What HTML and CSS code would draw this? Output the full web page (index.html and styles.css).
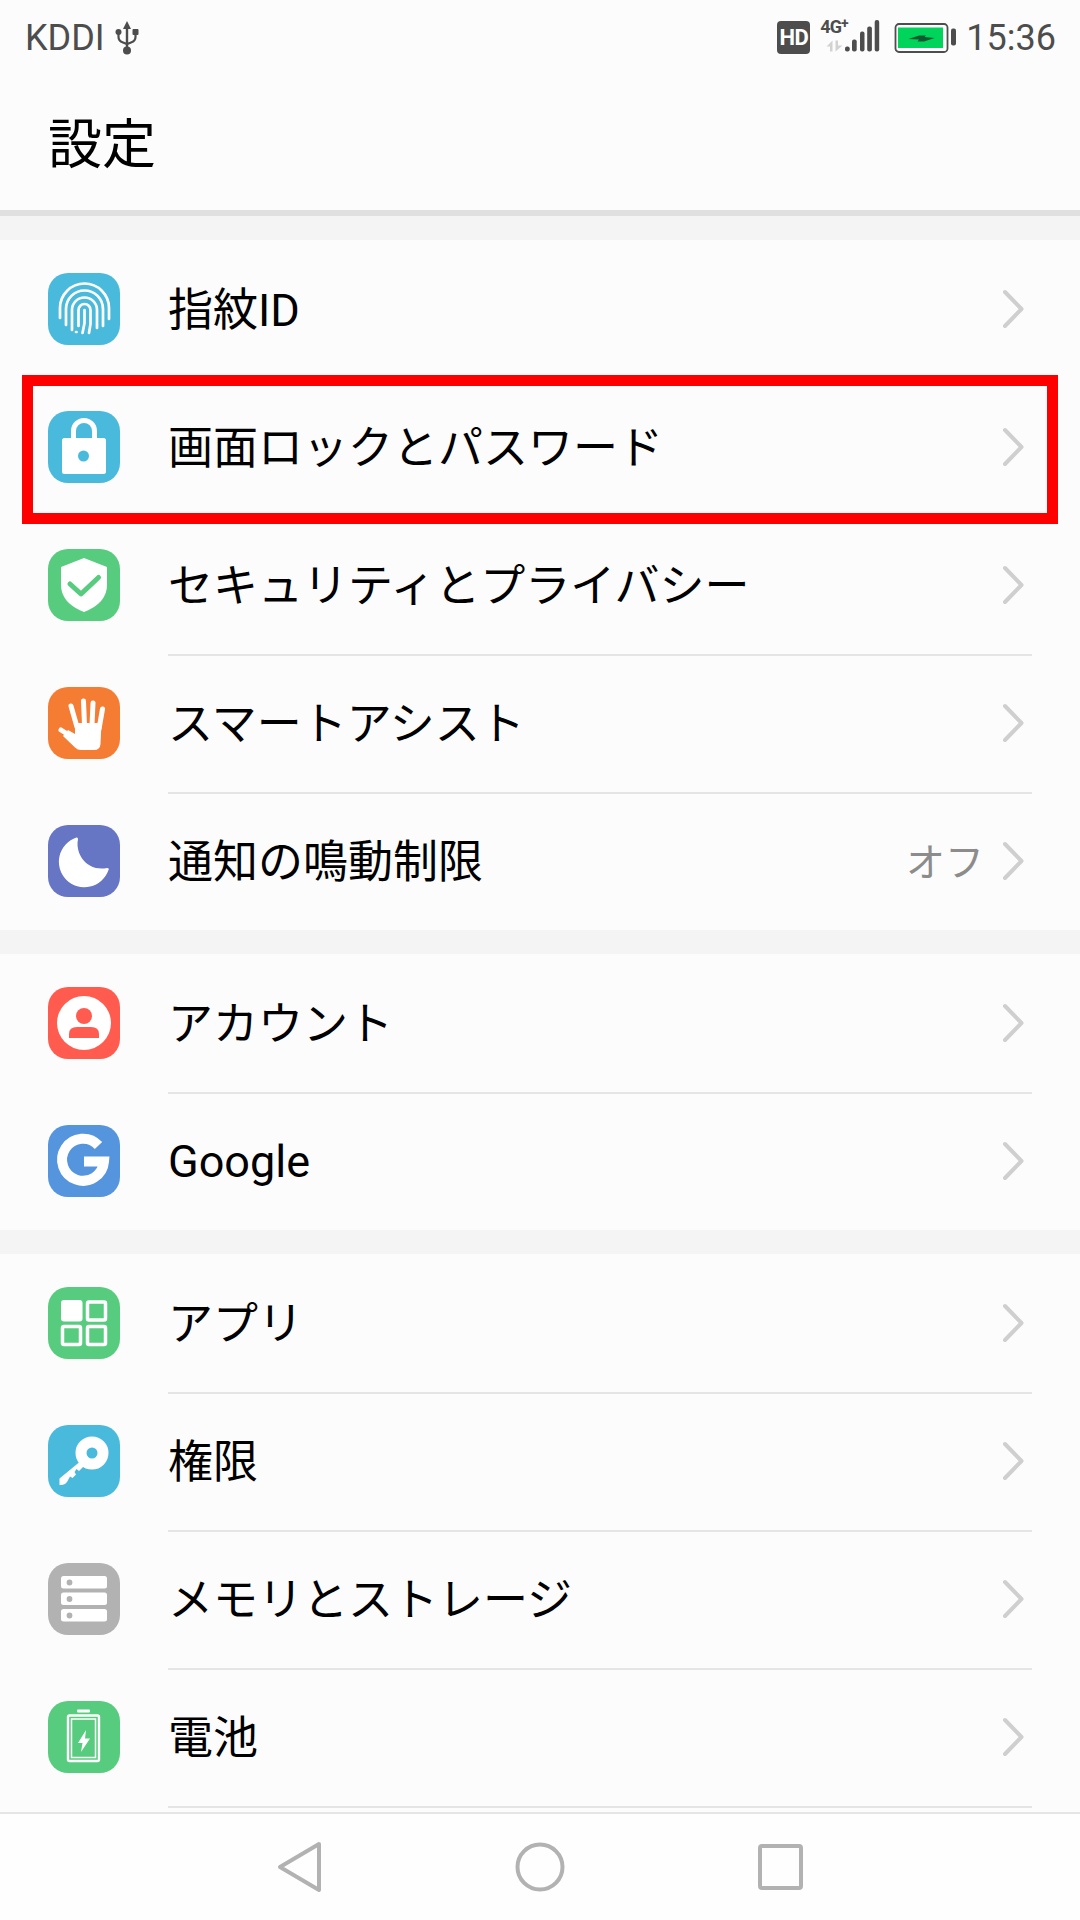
FILE: index.html
```html
<!DOCTYPE html>
<html lang="ja">
<head>
<meta charset="utf-8">
<title>設定</title>
<link rel="stylesheet" href="styles.css">
</head>
<body>
<div class="screen">
  <div class="status">
    <div class="status-left">
      <span class="carrier">KDDI</span>
      <svg class="usb" width="24" height="36" viewBox="0 0 24 36"><path d="M12 1 L16 9 H13.2 V30 H10.8 V9 H8 Z" fill="#4d4d4d"/><circle cx="12" cy="30.5" r="4" fill="#4d4d4d"/><path d="M3.5 13 V17 Q3.5 21 8 22.5 L12 24 L16 22.5 Q20.5 21 20.5 17 V13" fill="none" stroke="#4d4d4d" stroke-width="2.2"/><circle cx="3.5" cy="12" r="3" fill="#4d4d4d"/><rect x="17.5" y="9" width="6" height="6" rx="1" fill="#4d4d4d"/></svg>
    </div>
    <div class="status-right">
      <span class="hd">HD</span>
      <div class="signal">
        <span class="net">4G<sup class="plus">+</sup></span>
        <svg class="bars" width="60" height="36" viewBox="0 0 60 36">
          <path d="M6 31.500 H8.500 V20.500 L2.500 26.500 H6 Z" fill="#d2d2d2"/>
          <path d="M11.500 20.500 H14 V25.500 H18.500 L11.500 31.500 Z" fill="#d2d2d2"/>
          <rect x="21" y="26.500" width="4.700" height="5" rx="2" fill="#4d4d4d"/>
          <rect x="28" y="19.500" width="4.700" height="12" rx="2" fill="#4d4d4d"/>
          <rect x="36" y="11.500" width="4.500" height="20" rx="2" fill="#4d4d4d"/>
          <rect x="43.200" y="6.500" width="4.700" height="25" rx="2" fill="#4d4d4d"/>
          <rect x="50.700" y="0" width="4.500" height="31.500" rx="2" fill="#4d4d4d"/>
        </svg>
      </div>
      <svg class="battery" width="62" height="30" viewBox="0 0 62 30"><rect x="1.500" y="1" width="52" height="28" rx="3.500" fill="#fff" stroke="#4d4d4d" stroke-width="1.800"/><rect x="4" y="4.500" width="45" height="20.500" fill="#00d45a"/><path d="M14.500 16 L25 12.500 H32 L30.500 14 L40.500 15 L30 18.500 H23.500 L25 16.500 Z" fill="#0c5a30"/><rect x="57" y="5.500" width="5" height="17" rx="2" fill="#4d4d4d"/></svg>
      <span class="time">15:36</span>
    </div>
  </div>
  <header class="title-bar"><h1 class="title">設定</h1></header>

  <main class="list">
    <section class="group">
      <div class="row">
        <svg class="icon" viewBox="0 0 72 72"><rect width="72" height="72" rx="20" fill="#4abadc"/><g fill="none" stroke="#fff" stroke-width="2.700" stroke-linecap="round"><path d="M12 45 V35 a24.500 24.500 0 0 1 49 0 V46"/><path d="M18 52 V36 a18.500 18.500 0 0 1 37 0 V53"/><path d="M24 57 V37 a12.500 12.500 0 0 1 25 0 V55"/><path d="M30.500 53 V37 a6 6 0 0 1 12 0 V51 L41 60"/><path d="M36.500 37 V50 L34.500 60"/><path d="M28 59 h.5"/></g></svg>
        <div class="row-body"><span class="label">指紋ID</span><svg class="chev" viewBox="0 0 24 42"><path d="M4 4 L20.500 21 L4 38" fill="none" stroke="#cfcfcf" stroke-width="4" stroke-linecap="round" stroke-linejoin="round"/></svg></div>
      </div>
      <div class="row">
        <svg class="icon" viewBox="0 0 72 72"><rect width="72" height="72" rx="20" fill="#4abadc"/><path d="M25.500 28 V20 a10.500 10.500 0 0 1 21 0 V28" fill="none" stroke="#fff" stroke-width="5"/><rect x="14" y="27" width="44" height="36" rx="2.500" fill="#fff"/><circle cx="35.500" cy="45" r="5.500" fill="#4abadc"/></svg>
        <div class="row-body sep"><span class="label">画面ロックとパスワード</span><svg class="chev" viewBox="0 0 24 42"><path d="M4 4 L20.500 21 L4 38" fill="none" stroke="#cfcfcf" stroke-width="4" stroke-linecap="round" stroke-linejoin="round"/></svg></div>
      </div>
      <div class="row">
        <svg class="icon" viewBox="0 0 72 72"><rect width="72" height="72" rx="20" fill="#57cc7e"/><path d="M36 9 L59 18 V36 Q59 54 36 63 Q13 54 13 36 V18 Z" fill="#fff"/><path d="M22 35 L33 45 L50.500 28.500" fill="none" stroke="#57cc7e" stroke-width="5" stroke-linecap="round" stroke-linejoin="round"/></svg>
        <div class="row-body sep"><span class="label">セキュリティとプライバシー</span><svg class="chev" viewBox="0 0 24 42"><path d="M4 4 L20.500 21 L4 38" fill="none" stroke="#cfcfcf" stroke-width="4" stroke-linecap="round" stroke-linejoin="round"/></svg></div>
      </div>
      <div class="row">
        <svg class="icon" viewBox="0 0 72 72"><rect width="72" height="72" rx="20" fill="#f57c33"/><g fill="none" stroke="#fff" stroke-width="5" stroke-linecap="round"><path d="M23 19 L29 40"/><path d="M35.500 14 L36.500 38"/><path d="M45 16 L44 38"/><path d="M54.500 22 L51 42"/><path d="M13 43 L24 50"/></g><path d="M27 36 H53.500 L52.500 57 Q52 63 46 63 H33 Q29.500 63 27 60.500 L15 49 L20 43 L27 47 Z" fill="#fff"/></svg>
        <div class="row-body sep"><span class="label">スマートアシスト</span><svg class="chev" viewBox="0 0 24 42"><path d="M4 4 L20.500 21 L4 38" fill="none" stroke="#cfcfcf" stroke-width="4" stroke-linecap="round" stroke-linejoin="round"/></svg></div>
      </div>
      <div class="row">
        <svg class="icon" viewBox="0 0 72 72"><rect width="72" height="72" rx="20" fill="#6675c4"/><path d="M28.500 12.500 Q30 12 30 14.500 C27 28 38 47 59 43 Q61.500 43 60.500 45 A25.500 25.500 0 1 1 28.500 12.500 Z" fill="#fff"/></svg>
        <div class="row-body sep"><span class="label">通知の鳴動制限</span><span class="value">オフ</span><svg class="chev" viewBox="0 0 24 42"><path d="M4 4 L20.500 21 L4 38" fill="none" stroke="#cfcfcf" stroke-width="4" stroke-linecap="round" stroke-linejoin="round"/></svg></div>
      </div>
    </section>

    <section class="group">
      <div class="row">
        <svg class="icon" viewBox="0 0 72 72"><rect width="72" height="72" rx="20" fill="#ff5c4f"/><circle cx="36" cy="36" r="27" fill="#fff"/><circle cx="36" cy="29" r="8" fill="#ff5c4f"/><path d="M21 51 V47 Q21 40 29 40 H43 Q51 40 51 47 V51 Z" fill="#ff5c4f"/></svg>
        <div class="row-body"><span class="label">アカウント</span><svg class="chev" viewBox="0 0 24 42"><path d="M4 4 L20.500 21 L4 38" fill="none" stroke="#cfcfcf" stroke-width="4" stroke-linecap="round" stroke-linejoin="round"/></svg></div>
      </div>
      <div class="row">
        <svg class="icon" viewBox="0 0 72 72"><rect width="72" height="72" rx="20" fill="#5595dd"/><path d="M50.500 20.500 A21 21 0 1 0 56 36.500 H36" fill="none" stroke="#fff" stroke-width="10"/></svg>
        <div class="row-body sep"><span class="label latin">Google</span><svg class="chev" viewBox="0 0 24 42"><path d="M4 4 L20.500 21 L4 38" fill="none" stroke="#cfcfcf" stroke-width="4" stroke-linecap="round" stroke-linejoin="round"/></svg></div>
      </div>
    </section>

    <section class="group">
      <div class="row">
        <svg class="icon" viewBox="0 0 72 72"><rect width="72" height="72" rx="20" fill="#57cc7e"/><rect x="13" y="13" width="21.500" height="21.500" rx="3" fill="#fff"/><g fill="none" stroke="#fff" stroke-width="3.500"><rect x="39.500" y="15" width="18" height="18" rx="1.500"/><rect x="14.500" y="39.500" width="18" height="18" rx="1.500"/><rect x="39.500" y="39.500" width="18" height="18" rx="1.500"/></g></svg>
        <div class="row-body"><span class="label">アプリ</span><svg class="chev" viewBox="0 0 24 42"><path d="M4 4 L20.500 21 L4 38" fill="none" stroke="#cfcfcf" stroke-width="4" stroke-linecap="round" stroke-linejoin="round"/></svg></div>
      </div>
      <div class="row">
        <svg class="icon" viewBox="0 0 72 72"><rect width="72" height="72" rx="20" fill="#4abadc"/><circle cx="44" cy="28" r="11" fill="none" stroke="#fff" stroke-width="11"/><path d="M34 35 L38 39 L31 46 L28.500 44 L26.500 47 L28 49.500 L24.500 53 L22 51.500 L19 57 Q17 60 14 60 H11.500 V53.500 Z" fill="#fff"/></svg>
        <div class="row-body sep"><span class="label">権限</span><svg class="chev" viewBox="0 0 24 42"><path d="M4 4 L20.500 21 L4 38" fill="none" stroke="#cfcfcf" stroke-width="4" stroke-linecap="round" stroke-linejoin="round"/></svg></div>
      </div>
      <div class="row">
        <svg class="icon" viewBox="0 0 72 72"><rect width="72" height="72" rx="20" fill="#b2b2b2"/><g fill="#fff"><rect x="13" y="13" width="46" height="12.500" rx="2.500"/><rect x="13" y="29.500" width="46" height="12.500" rx="2.500"/><rect x="13" y="46" width="46" height="12.500" rx="2.500"/></g><g fill="#b2b2b2"><circle cx="21.500" cy="19.500" r="2.900"/><circle cx="21.500" cy="36" r="2.900"/><circle cx="21.500" cy="52.500" r="2.900"/></g></svg>
        <div class="row-body sep"><span class="label">メモリとストレージ</span><svg class="chev" viewBox="0 0 24 42"><path d="M4 4 L20.500 21 L4 38" fill="none" stroke="#cfcfcf" stroke-width="4" stroke-linecap="round" stroke-linejoin="round"/></svg></div>
      </div>
      <div class="row">
        <svg class="icon" viewBox="0 0 72 72"><rect width="72" height="72" rx="20" fill="#57cc7e"/><rect x="29" y="8.500" width="13" height="3" rx="1" fill="#fff"/><rect x="20" y="14.500" width="31" height="45.500" rx="1.500" fill="none" stroke="#fff" stroke-width="2.400"/><rect x="23.500" y="18" width="24" height="38.500" fill="none" stroke="#fff" stroke-width="1.500"/><path d="M38 29 L30 42 H34.500 L33 51 L42 37.500 H37 Z" fill="#fff"/></svg>
        <div class="row-body sep"><span class="label">電池</span><svg class="chev" viewBox="0 0 24 42"><path d="M4 4 L20.500 21 L4 38" fill="none" stroke="#cfcfcf" stroke-width="4" stroke-linecap="round" stroke-linejoin="round"/></svg></div>
      </div>
      <div class="row-tail"></div>
    </section>
  </main>

  <nav class="nav">
    <svg class="nav-back" width="45" height="52" viewBox="0 0 45 52"><path d="M42 3 L3 26 L42 49 Z" fill="none" stroke="#b2b2b2" stroke-width="4" stroke-linejoin="round"/></svg>
    <svg class="nav-home" width="50" height="50" viewBox="0 0 50 50"><circle cx="25" cy="25" r="22.500" fill="none" stroke="#b2b2b2" stroke-width="4"/></svg>
    <svg class="nav-recent" width="45" height="46" viewBox="0 0 45 46"><rect x="2" y="2" width="41" height="42" rx="2" fill="none" stroke="#b2b2b2" stroke-width="4"/></svg>
  </nav>

  <div class="highlight"></div>
</div>
</body>
</html>
```

FILE: styles.css
```css
* { box-sizing: border-box; }
html, body { margin: 0; padding: 0; }
body {
  width: 1080px;
  height: 1920px;
  overflow: hidden;
  background: #fcfcfc;
  font-family: "Noto Sans CJK JP", Roboto, sans-serif;
  color: #000;
}
.screen {
  position: relative;
  width: 1080px;
  height: 1920px;
  display: flex;
  flex-direction: column;
}
.status {
  height: 72px;
  flex: none;
  display: flex;
  align-items: center;
  justify-content: space-between;
  padding: 3px 24px 0 25px;
  color: #4d4d4d;
  font-family: Roboto, sans-serif;
}
.status-left, .status-right { display: flex; align-items: center; }
.carrier { font-size: 36px; line-height: 66px; }
.usb { margin-left: 10px; }
.hd {
  width: 33px;
  height: 33px;
  margin-right: 14px;
  border-radius: 4px;
  background: #4d4d4d;
  color: #fff;
  font-size: 22px;
  font-weight: 700;
  line-height: 33px;
  text-align: center;
  letter-spacing: -0.5px;
}
.signal { position: relative; width: 60px; height: 36px; margin-right: 10px; }
.net {
  position: absolute;
  left: -4px;
  top: -3px;
  font-size: 18px;
  font-weight: 700;
  line-height: 20px;
  letter-spacing: -1px;
}
.plus { font-size: 14px; line-height: 0; vertical-align: 5px; }
.bars { display: block; }
.battery { margin-right: 10px; }
.time { font-size: 36px; line-height: 66px; }

.title-bar {
  height: 144px;
  flex: none;
  display: flex;
  align-items: center;
  padding: 0 0 0 48px;
  border-bottom: 6px solid #e0e0e0;
}
.title { margin: 0; font-size: 54px; font-weight: 400; line-height: 1; }

.list {
  flex: 1;
  min-height: 0;
  overflow: hidden;
  background: #f4f4f4;
  padding-top: 24px;
  display: flex;
  flex-direction: column;
  gap: 24px;
}
.group { background: #fcfcfc; display: flex; flex-direction: column; }
.row {
  height: 138px;
  display: flex;
  align-items: center;
  padding: 0 48px;
}
.icon { width: 72px; height: 72px; flex: none; display: block; }
.row-body {
  flex: 1;
  align-self: stretch;
  margin-left: 48px;
  display: flex;
  align-items: center;
  border-top: 2px solid transparent;
}
.row-body.sep { border-top-color: #e5e5e5; }
.label {
  flex: 1;
  font-family: Roboto, "Noto Sans CJK JP", sans-serif;
  font-size: 45px;
  line-height: 60px;
  padding-top: 2px;
}
.label.latin { padding-top: 0; }
.value { font-size: 39px; color: #8c8c8c; margin-right: 17px; padding-bottom: 7px; }
.chev { width: 24px; height: 42px; flex: none; margin: 0 7px 2px 0; }
.row-tail { height: 6px; margin: 0 48px 0 168px; border-top: 2px solid #e5e5e5; }

.nav {
  height: 108px;
  flex: none;
  border-top: 2px solid #e5e5e5;
  background: #fefefe;
  display: flex;
  align-items: center;
  padding: 0 0 0 277px;
  gap: 193px;
}
.highlight {
  position: absolute;
  left: 22px;
  top: 375px;
  width: 1036px;
  height: 149px;
  border: 11px solid #ff0000;
  pointer-events: none;
}
```
